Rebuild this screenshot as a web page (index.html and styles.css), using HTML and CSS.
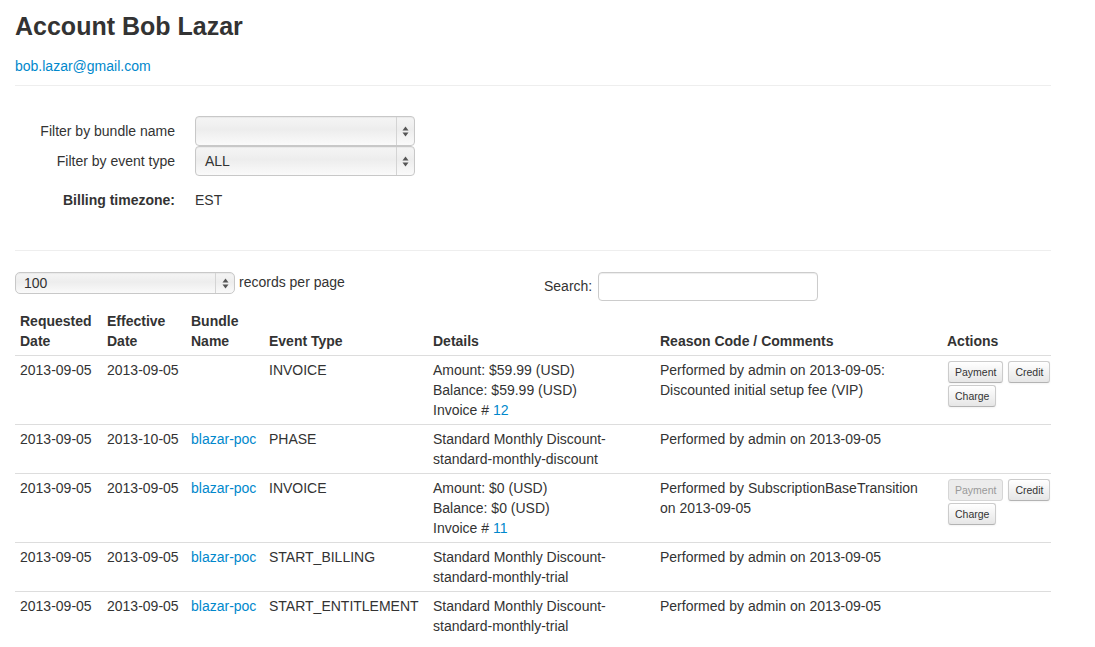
FILE: index.html
```html
<!DOCTYPE html>
<html>
<head>
<meta charset="utf-8">
<title>Account Bob Lazar</title>
<link rel="stylesheet" href="styles.css">
</head>
<body>
<div class="container">
  <h1 class="title">Account Bob Lazar</h1>
  <p class="email"><a href="#">bob.lazar@gmail.com</a></p>
  <hr class="rule rule-top">

  <div class="form">
    <div class="form-row">
      <label class="control-label">Filter by bundle name</label>
      <div class="select select-lg">
        <span class="select-value"></span>
        <span class="select-arrow"><svg width="7" height="11" viewBox="0 0 7 11"><path d="M3.5 0.5 L6.5 4.5 L0.5 4.5 Z M3.5 10.5 L6.5 6.5 L0.5 6.5 Z" fill="#555"/></svg></span>
      </div>
    </div>
    <div class="form-row">
      <label class="control-label">Filter by event type</label>
      <div class="select select-lg">
        <span class="select-value">ALL</span>
        <span class="select-arrow"><svg width="7" height="11" viewBox="0 0 7 11"><path d="M3.5 0.5 L6.5 4.5 L0.5 4.5 Z M3.5 10.5 L6.5 6.5 L0.5 6.5 Z" fill="#555"/></svg></span>
      </div>
    </div>
    <div class="form-row form-row-static">
      <span class="control-label strong">Billing timezone:</span>
      <span class="static-value">EST</span>
    </div>
  </div>

  <hr class="rule rule-mid">

  <div class="table-tools">
    <div class="length">
      <div class="select select-sm">
        <span class="select-value">100</span>
        <span class="select-arrow"><svg width="7" height="11" viewBox="0 0 7 11"><path d="M3.5 0.5 L6.5 4.5 L0.5 4.5 Z M3.5 10.5 L6.5 6.5 L0.5 6.5 Z" fill="#555"/></svg></span>
      </div>
      <span class="length-label">records per page</span>
    </div>
    <div class="filter">
      <label class="filter-label">Search:</label>
      <span class="search-input"></span>
    </div>
  </div>

  <table class="events">
    <colgroup>
      <col class="c-req"><col class="c-eff"><col class="c-bun"><col class="c-type"><col class="c-det"><col class="c-reason"><col class="c-act">
    </colgroup>
    <thead>
      <tr>
        <th>Requested Date</th>
        <th>Effective Date</th>
        <th>Bundle Name</th>
        <th>Event Type</th>
        <th>Details</th>
        <th>Reason Code / Comments</th>
        <th>Actions</th>
      </tr>
    </thead>
    <tbody>
      <tr>
        <td>2013-09-05</td>
        <td>2013-09-05</td>
        <td></td>
        <td>INVOICE</td>
        <td>Amount: $59.99 (USD)<br>Balance: $59.99 (USD)<br>Invoice # <a href="#">12</a></td>
        <td>Performed by admin on 2013-09-05: Discounted initial setup fee (VIP)</td>
        <td><div class="actions"><span class="btn">Payment</span><span class="btn">Credit</span><span class="btn">Charge</span></div></td>
      </tr>
      <tr>
        <td>2013-09-05</td>
        <td>2013-10-05</td>
        <td><a href="#">blazar-poc</a></td>
        <td>PHASE</td>
        <td>Standard Monthly Discount-<br>standard-monthly-discount</td>
        <td>Performed by admin on 2013-09-05</td>
        <td></td>
      </tr>
      <tr>
        <td>2013-09-05</td>
        <td>2013-09-05</td>
        <td><a href="#">blazar-poc</a></td>
        <td>INVOICE</td>
        <td>Amount: $0 (USD)<br>Balance: $0 (USD)<br>Invoice # <a href="#">11</a></td>
        <td>Performed by SubscriptionBaseTransition on 2013-09-05</td>
        <td><div class="actions"><span class="btn btn-disabled">Payment</span><span class="btn">Credit</span><span class="btn">Charge</span></div></td>
      </tr>
      <tr>
        <td>2013-09-05</td>
        <td>2013-09-05</td>
        <td><a href="#">blazar-poc</a></td>
        <td>START_BILLING</td>
        <td>Standard Monthly Discount-<br>standard-monthly-trial</td>
        <td>Performed by admin on 2013-09-05</td>
        <td></td>
      </tr>
      <tr>
        <td>2013-09-05</td>
        <td>2013-09-05</td>
        <td><a href="#">blazar-poc</a></td>
        <td>START_ENTITLEMENT</td>
        <td>Standard Monthly Discount-<br>standard-monthly-trial</td>
        <td>Performed by admin on 2013-09-05</td>
        <td></td>
      </tr>
    </tbody>
  </table>
</div>
</body>
</html>
```
FILE: styles.css
```css
* { box-sizing: border-box; }

body {
  margin: 0;
  background: #fff;
  color: #333;
  font-family: "Liberation Sans", Arial, Helvetica, sans-serif;
  font-size: 14px;
  line-height: 20px;
}

a { color: #0088cc; text-decoration: none; }

.container {
  width: 1066px;
  padding: 0 15px;
}

.title {
  margin: 6px 0 0;
  font-size: 25px;
  line-height: 40px;
  font-weight: bold;
  color: #333;
}

.email { margin: 10px 0 0; }

.rule {
  border: 0;
  border-top: 1px solid #eee;
  margin: 0;
  height: 0;
}
.rule-top { margin-top: 9px; }
.rule-mid { margin-top: 35px; }

.form { margin-top: 30px; }

.form-row {
  display: flex;
  align-items: center;
  height: 30px;
}

.form-row-static {
  margin-top: 9px;
  height: 30px;
}

.control-label {
  width: 160px;
  text-align: right;
  margin-right: 20px;
}

.strong { font-weight: bold; }

.select {
  display: flex;
  align-items: stretch;
  border: 1px solid #c8c8c8;
  border-radius: 4px;
  background: linear-gradient(#f5f5f5, #ededed 45%, #fafafa);
  box-shadow: inset 0 1px 1px rgba(0,0,0,0.05);
  color: #333;
}

.select-value {
  flex: 1;
  display: flex;
  align-items: center;
}

.select-arrow {
  display: flex;
  align-items: center;
  justify-content: center;
  border-left: 1px solid #d4d4d4;
}

.select-lg {
  width: 220px;
  height: 30px;
}
.select-lg .select-value { padding-left: 9px; }
.select-lg .select-arrow { width: 18px; }

.select-sm {
  width: 220px;
  height: 22px;
  border-radius: 5px;
}
.select-sm .select-value { padding-left: 8px; }
.select-sm .select-arrow { width: 19px; }

.table-tools {
  display: flex;
  margin-top: 21px;
  height: 35px;
}

.length {
  width: 529px;
  display: flex;
  align-items: flex-start;
}

.length-label {
  margin-left: 4px;
  line-height: 20px;
  margin-top: 0;
}

.filter {
  display: flex;
  align-items: flex-start;
}

.filter-label {
  margin-top: 4px;
  margin-right: 6px;
}

.search-input {
  display: block;
  width: 220px;
  height: 29px;
  border: 1px solid #ccc;
  border-radius: 4px;
  box-shadow: inset 0 1px 1px rgba(0,0,0,0.075);
  background: #fff;
}

.events {
  width: 1036px;
  table-layout: fixed;
  border-collapse: collapse;
  border-spacing: 0;
}

.c-req { width: 87px; }
.c-eff { width: 84px; }
.c-bun { width: 78px; }
.c-type { width: 164px; }
.c-det { width: 227px; }
.c-reason { width: 287px; }
.c-act { width: 109px; }

.events th {
  text-align: left;
  font-weight: bold;
  vertical-align: bottom;
  padding: 4px 5px;
}

.events td {
  vertical-align: top;
  padding: 4px 5px;
  border-top: 1px solid #ddd;
}

.actions {
  display: flex;
  flex-wrap: wrap;
  gap: 2px 5px;
  width: 104px;
  margin-top: 1px;
  margin-left: 1px;
  margin-bottom: 2px;
}

.btn {
  display: inline-block;
  height: 22px;
  padding: 0 6px;
  font-size: 10.5px;
  line-height: 20px;
  color: #333;
  text-align: center;
  border: 1px solid #ccc;
  border-bottom-color: #b3b3b3;
  border-radius: 3px;
  background: linear-gradient(#ffffff, #e6e6e6);
  box-shadow: inset 0 1px 0 rgba(255,255,255,0.2), 0 1px 2px rgba(0,0,0,0.05);
}

.btn-disabled {
  background: #ececec;
  color: #999;
  border-color: #d6d6d6;
  box-shadow: none;
}
```
